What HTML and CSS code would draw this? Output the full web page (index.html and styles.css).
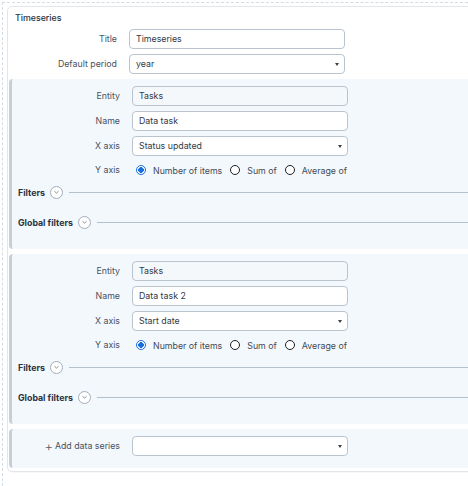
FILE: index.html
```html
<!DOCTYPE html>
<html>
<head>
<meta charset="utf-8">
<link rel="stylesheet" href="styles.css">
</head>
<body>
<div class="frame">
  <div class="card">
    <div class="card-title">Timeseries</div>
    <div class="form top-form">
      <label class="lbl">Title</label>
      <div class="input">Timeseries</div>
      <label class="lbl">Default period</label>
      <div class="input select">year<span class="caret"></span></div>
    </div>

    <div class="panel">
      <div class="form">
        <label class="lbl">Entity</label>
        <div class="input ro">Tasks</div>
        <label class="lbl">Name</label>
        <div class="input">Data task</div>
        <label class="lbl">X axis</label>
        <div class="input select">Status updated<span class="caret"></span></div>
        <label class="lbl yl">Y axis</label>
        <div class="radios">
          <span class="radio on"></span><span class="rtext">Number of items</span>
          <span class="radio"></span><span class="rtext">Sum of</span>
          <span class="radio"></span><span class="rtext">Average of</span>
        </div>
      </div>
      <div class="section s1"><span class="sec-title">Filters</span><span class="chev"><svg viewBox="0 0 12 12" width="12" height="12"><path d="M3.8 5.2 L6 7.2 L8.2 5.2" fill="none" stroke="#6b7785" stroke-width="0.9"/></svg></span><span class="rule"></span></div>
      <div class="section s2"><span class="sec-title">Global filters</span><span class="chev"><svg viewBox="0 0 12 12" width="12" height="12"><path d="M3.8 5.2 L6 7.2 L8.2 5.2" fill="none" stroke="#6b7785" stroke-width="0.9"/></svg></span><span class="rule"></span></div>
    </div>

    <div class="panel">
      <div class="form">
        <label class="lbl">Entity</label>
        <div class="input ro">Tasks</div>
        <label class="lbl">Name</label>
        <div class="input">Data task 2</div>
        <label class="lbl">X axis</label>
        <div class="input select">Start date<span class="caret"></span></div>
        <label class="lbl yl">Y axis</label>
        <div class="radios">
          <span class="radio on"></span><span class="rtext">Number of items</span>
          <span class="radio"></span><span class="rtext">Sum of</span>
          <span class="radio"></span><span class="rtext">Average of</span>
        </div>
      </div>
      <div class="section s1"><span class="sec-title">Filters</span><span class="chev"><svg viewBox="0 0 12 12" width="12" height="12"><path d="M3.8 5.2 L6 7.2 L8.2 5.2" fill="none" stroke="#6b7785" stroke-width="0.9"/></svg></span><span class="rule"></span></div>
      <div class="section s2"><span class="sec-title">Global filters</span><span class="chev"><svg viewBox="0 0 12 12" width="12" height="12"><path d="M3.8 5.2 L6 7.2 L8.2 5.2" fill="none" stroke="#6b7785" stroke-width="0.9"/></svg></span><span class="rule"></span></div>
    </div>

    <div class="panel add-panel">
      <div class="form">
        <label class="lbl add-lbl"><span class="plus">+</span>Add data series</label>
        <div class="input select"><span class="caret"></span></div>
      </div>
    </div>
  </div>
</div>
</body>
</html>
```
FILE: styles.css
```css
html, body {
  margin: 0;
  padding: 0;
  background: #ffffff;
  overflow: hidden;
}
body {
  width: 468px;
  height: 486px;
  font-family: Inter, "Noto Sans", sans-serif;
  font-size: 8.8px;
  color: #333a44;
}
.frame {
  margin: 2px 0 0 2px;
  border-left: 1px dashed #d3dbe4;
  border-top: 1px dashed #d3dbe4;
  padding: 3px 0 0 4px;
  height: 480px;
}
.card {
  width: 480px;
  background: #fff;
  border: 1px solid #e2e6eb;
  border-radius: 5px;
  padding: 5px 0 3px 0;
  box-shadow: 0 1px 1px rgba(0,0,0,0.03);
}
.card-title {
  padding-left: 7px;
  font-weight: 500;
  color: #2c333d;
  line-height: 12px;
  margin-bottom: 5px;
}
.form {
  display: grid;
  grid-template-columns: 109px 216px;
  column-gap: 12px;
  row-gap: 5px;
  align-items: center;
}
.lbl {
  text-align: right;
  color: #4a525d;
  line-height: 12px;
  white-space: nowrap;
}
.input {
  box-sizing: border-box;
  height: 20px;
  border: 1px solid #b9c4cf;
  border-radius: 4px;
  background: #fff;
  padding: 0 6px;
  line-height: 18px;
  color: #333a44;
  position: relative;
}
.input.ro {
  background: #f5f8fb;
}
.caret {
  position: absolute;
  right: 5px;
  top: 8px;
  width: 0;
  height: 0;
  border-left: 2.5px solid transparent;
  border-right: 2.5px solid transparent;
  border-top: 3px solid #3b4148;
}
.panel {
  margin: 5px 0 0 1px;
  background: #f3f8fd;
  border-left: 3px solid #c6ced7;
  border-radius: 4px 0 0 4px;
  padding: 7px 0 0 0;
  height: 163px;
}
.panel .form {
  grid-template-columns: 108px 216px;
}
.yl {
  margin-top: 2px;
}
.radios {
  display: flex;
  align-items: center;
  height: 14px;
  margin-top: 2px;
  padding-left: 4px;
  color: #444b55;
  white-space: nowrap;
}
.radio {
  box-sizing: border-box;
  flex: none;
  width: 10px;
  height: 10px;
  border: 1.2px solid #1b1f24;
  border-radius: 50%;
  background: #fff;
  margin-right: 7px;
}
.radio.on {
  border: 1.5px solid #1a6fe0;
  background: radial-gradient(circle, #1a6fe0 0 2.6px, #fff 3px);
}
.rtext {
  margin-right: 8px;
  flex: none;
}
.section {
  display: flex;
  align-items: center;
  height: 14px;
  padding-left: 6px;
}
.s1 {
  margin-top: 8px;
}
.s2 {
  margin-top: 16px;
}
.sec-title {
  font-weight: 700;
  color: #2b333d;
}
.chev {
  box-sizing: border-box;
  width: 13px;
  height: 13px;
  border: 1px solid #a3adb8;
  border-radius: 50%;
  margin-left: 5px;
  display: flex;
  align-items: center;
  justify-content: center;
  background: #fff;
}
.chev svg {
  display: block;
}
.rule {
  flex: 1;
  height: 1px;
  background: #b3c1ce;
  margin-left: 6px;
}
.add-panel {
  height: auto;
  padding: 7px 0 12px 0;
}
.add-lbl {
  display: flex;
  justify-content: flex-end;
  align-items: center;
}
.plus {
  font-size: 13px;
  font-weight: 300;
  color: #555d67;
  margin-right: 2px;
  line-height: 12px;
}
```
